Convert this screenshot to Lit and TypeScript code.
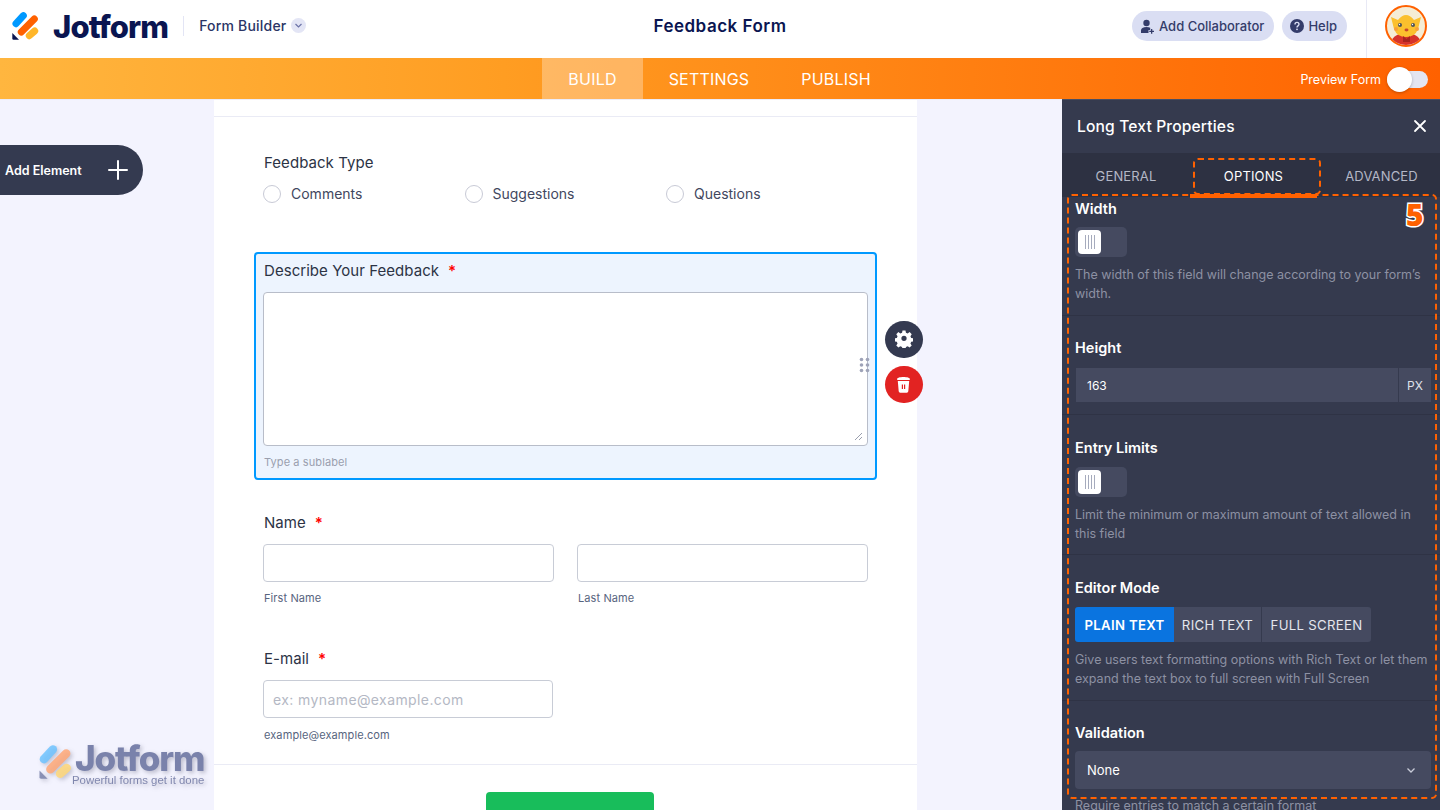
import { LitElement, css, html, svg } from "lit";
import { customElement } from "lit/decorators.js";

const logoMark = (dark: string, blue: string, orange: string, yellow: string) => svg`
  <path d="M0.300 21 L7 27.700 L1.500 27.700 Q0.300 27.700 0.300 26.500 Z" fill=${dark}/>
  <g fill="none" stroke-width="7" stroke-linecap="round">
    <path d="M4 11.700L11.300 3.700" stroke=${blue}/>
    <path d="M9.300 20L22.300 7" stroke=${orange}/>
    <path d="M17.300 23.700L22.700 19" stroke=${yellow}/>
  </g>
`;

@customElement("app-root")
export class AppRoot extends LitElement {
  static styles = css`
    :host {
      display: block;
      width: 1440px;
      height: 810px;
      overflow: hidden;
      position: relative;
      font-family: Inter, "Liberation Sans", sans-serif;
      background: #f3f3fe;
      color: #2c3345;
    }

    /* top bar */
    .topbar {
      height: 58px;
      background: #fff;
      display: flex;
      align-items: center;
    }
    .brand {
      display: flex;
      align-items: center;
      width: 320px;
      height: 52px;
      margin-bottom: 6px;
      padding-left: 12px;
      box-sizing: border-box;
    }
    .wordmark {
      margin-left: 14px;
      font-size: 31px;
      font-weight: 800;
      letter-spacing: -0.900px;
      color: #0a1551;
      line-height: 1;
    }
    .brand-sep {
      width: 1px;
      height: 20px;
      background: #e3e5f5;
      margin: 0 15px;
    }
    .product {
      font-size: 14px;
      color: #2b3566;
      font-weight: 500;
      letter-spacing: 0.2px;
      margin-bottom: 2px;
    }
    .caret {
      width: 15px;
      height: 15px;
      margin: 0 0 1px 5px;
      border-radius: 50%;
      background: #e3e5f5;
      display: flex;
      align-items: center;
      justify-content: center;
    }
    .title {
      flex: 1;
      margin-bottom: 6px;
      text-align: center;
      font-size: 17px;
      font-weight: 600;
      letter-spacing: 0.5px;
      color: #0a1551;
    }
    .actions {
      width: 320px;
      height: 58px;
      display: flex;
      align-items: center;
      box-sizing: border-box;
      padding-left: 12px;
    }
    .pill {
      height: 30px;
      margin-bottom: 6px;
      border-radius: 15px;
      background: #dadef3;
      color: #343c6a;
      font-size: 13px;
      font-weight: 500;
      display: flex;
      align-items: center;
      gap: 4px;
      padding: 0 10px 0 8px;
      box-sizing: border-box;
      margin-right: 8px;
    }
    .user {
      margin-left: auto;
      width: 74px;
      height: 58px;
      border-left: 1px solid #e8e9f5;
      box-sizing: border-box;
      display: flex;
      align-items: center;
      justify-content: center;
      padding: 0 0 6px 5px;
    }

    /* orange nav */
    .nav {
      height: 42px;
      box-sizing: border-box;
      background: linear-gradient(90deg, #ffb63f 0%, #ff9d22 35%, #ff6100 100%);
      border-bottom: 1px solid #000;
      border-image: linear-gradient(90deg, #ececf8 1062px, #4a4e62 1062px) 1;
      background-clip: padding-box;
      display: flex;
      justify-content: center;
      position: relative;
      padding-right: 2px;
    }
    .nav-item {
      height: 41px;
      display: flex;
      align-items: center;
      justify-content: center;
      color: #fff;
      font-size: 16px;
      letter-spacing: 0.2px;
      text-indent: 1px;
      box-sizing: border-box;
    }
    .nav-item.active {
      background: rgba(255, 255, 255, 0.3);
    }
    .preview {
      position: absolute;
      right: 12px;
      top: 0;
      height: 41px;
      padding-top: 1px;
      box-sizing: border-box;
      display: flex;
      align-items: center;
      gap: 6px;
      color: #fff;
      font-size: 12.5px;
    }
    .preview-track {
      width: 41px;
      height: 17px;
      border-radius: 9px;
      background: #e3e5f0;
      position: relative;
    }
    .preview-knob {
      position: absolute;
      left: 0;
      top: -4px;
      width: 25px;
      height: 25px;
      border-radius: 50%;
      background: #fff;
      box-shadow: 0 1px 3px rgba(0, 0, 0, 0.25);
    }

    /* main area */
    .main {
      height: 710px;
      display: flex;
    }
    .canvas {
      width: 1062px;
      position: relative;
      overflow: hidden;
    }
    .card {
      width: 703px;
      margin-left: 214px;
      height: 100%;
      background: #fff;
      box-sizing: border-box;
      position: relative;
    }
    .card-top {
      height: 17px;
      border-bottom: 1px solid #eaebf5;
      box-sizing: border-box;
    }
    .fields {
      padding: 0 40px;
    }
    .field-label {
      font-size: 15px;
      line-height: 20px;
      letter-spacing: 0.05px;
      color: #2c3345;
      font-weight: 400;
      margin-left: 10px;
    }
    .req {
      color: #f00;
      margin-left: 9px;
      font-weight: 600;
    }
    .type {
      padding-top: 36px;
    }
    .radios {
      display: grid;
      grid-template-columns: 201.5px 201.5px 1fr;
      margin-top: 11px;
      padding-left: 9px;
    }
    .radio {
      display: flex;
      align-items: center;
      gap: 10px;
      font-size: 14px;
      line-height: 20px;
      color: #42475e;
    }
    .dot {
      width: 18px;
      height: 18px;
      border: 1px solid #c8cad6;
      border-radius: 50%;
      box-sizing: border-box;
      background: #fff;
      flex: none;
    }
    .selected {
      margin-top: 48px;
      height: 228px;
      border: 2px solid #0099ff;
      border-radius: 4px;
      background: #edf4fe;
      box-sizing: border-box;
      padding: 7px 7px 0 7px;
      position: relative;
    }
    .selected .field-label {
      margin-left: 1px;
    }
    .textarea {
      margin-top: 11px;
      height: 154px;
      background: #fff;
      border: 1px solid #b8bdc9;
      border-radius: 4px;
      box-sizing: border-box;
      position: relative;
    }
    .resize {
      position: absolute;
      right: 4px;
      bottom: 4px;
    }
    .grip {
      position: absolute;
      right: -3px;
      top: 64px;
    }
    .sub {
      font-size: 11px;
      line-height: 14px;
      letter-spacing: 0.1px;
      color: #57647e;
    }
    .selected .sub {
      color: #9a9fae;
      margin: 9px 0 0 1px;
    }
    .name {
      margin-top: 33px;
    }
    .input {
      height: 38px;
      background: #fff;
      border: 1px solid #c8ccd6;
      border-radius: 4px;
      box-sizing: border-box;
      display: flex;
      align-items: center;
      padding-left: 9px;
      font-size: 14px;
      letter-spacing: 0.4px;
      color: #b4b8c4;
    }
    .name-row {
      display: grid;
      grid-template-columns: 291px 291px;
      column-gap: 23px;
      margin: 11px 0 0 9px;
    }
    .name-row .sub {
      margin: 9px 0 0 1px;
    }
    .email {
      margin-top: 44px;
    }
    .email-box {
      width: 290px;
      margin: 11px 0 0 9px;
    }
    .email-box .sub {
      margin: 10px 0 0 1px;
    }
    .submit-line {
      height: 28px;
      margin-top: 22px;
      border-top: 1px solid #eaebf5;
      box-sizing: border-box;
    }
    .submit {
      width: 168px;
      height: 50px;
      margin-left: 272px;
      background: #18bd5b;
      border-radius: 4px;
      color: #fff;
      font-size: 16px;
      font-weight: 600;
      display: flex;
      align-items: center;
      justify-content: center;
    }

    .add {
      position: absolute;
      left: 0;
      top: 45px;
      width: 143px;
      height: 50px;
      background: #343a50;
      color: #fff;
      border-radius: 0 25px 25px 0;
      display: flex;
      align-items: center;
      justify-content: space-between;
      box-sizing: border-box;
      padding: 0 15px 0 5px;
      font-size: 12.5px;
      font-weight: 600;
    }
    .round {
      position: absolute;
      left: 885px;
      width: 37.500px;
      height: 37.500px;
      border-radius: 50%;
      display: flex;
      align-items: center;
      justify-content: center;
    }
    .gear {
      top: 220.500px;
      background: #343a50;
    }
    .trash {
      top: 265.500px;
      background: #e22322;
    }

    .mark {
      position: absolute;
      left: 38px;
      top: 643px;
      width: 170px;
      height: 46px;
      color: #7a82ab;
      filter: drop-shadow(2px 2px 2px rgba(60, 60, 90, 0.3));
    }
    .mark-word {
      position: absolute;
      left: 37px;
      top: 0;
      font-size: 35px;
      font-weight: 800;
      letter-spacing: -1.100px;
      line-height: 30px;
    }
    .mark-sub {
      position: absolute;
      left: 34px;
      top: 30px;
      white-space: nowrap;
      font-family: "Liberation Sans", sans-serif;
      font-size: 11.400px;
      line-height: 14px;
      color: #8087ae;
    }
    .mark svg {
      position: absolute;
      left: 1px;
      top: 2px;
    }

    /* properties panel */
    .panel {
      width: 378px;
      background: #353a4e;
      color: #fff;
      position: relative;
      overflow: hidden;
    }
    .panel-head {
      height: 53px;
      padding: 0 13px 1px 15px;
      box-sizing: border-box;
      display: flex;
      align-items: center;
      justify-content: space-between;
      font-size: 15.600px;
      font-weight: 500;
      letter-spacing: 0.15px;
    }
    .tabs {
      height: 44px;
      background: #2d3142;
      display: grid;
      grid-template-columns: 128px 127px 1fr;
    }
    .tab {
      display: flex;
      align-items: center;
      justify-content: center;
      padding-top: 1px;
      font-size: 13px;
      letter-spacing: 0.15px;
      color: #b4b8c7;
      box-sizing: border-box;
    }
    .tab:last-child {
      padding-left: 6px;
    }
    .tab.active {
      color: #fff;
      position: relative;
      z-index: 2;
    }
    .tab.active::after {
      content: "";
      position: absolute;
      left: 0;
      right: 0;
      bottom: -1px;
      height: 4px;
      background: #ff6100;
    }
    .section {
      padding: 0 9px 0 13px;
      border-bottom: 1px solid #2f3345;
      box-sizing: border-box;
    }
    .section:last-child {
      border-bottom: 0;
    }
    .prop {
      font-size: 14.500px;
      font-weight: 600;
      line-height: 20px;
    }
    .help {
      font-size: 12.500px;
      line-height: 19px;
      color: #8d91a3;
    }
    .switch {
      width: 52px;
      height: 30px;
      background: #454a60;
      border-radius: 5px;
      position: relative;
    }
    .switch-knob {
      position: absolute;
      left: 3px;
      top: 3px;
      width: 23px;
      height: 24px;
      background: #fff;
      border-radius: 4px;
      display: flex;
      align-items: center;
      justify-content: center;
      gap: 2px;
    }
    .switch-knob i {
      width: 1px;
      height: 14px;
      background: #a6abbd;
    }
    .s-width {
      height: 119px;
      padding-top: 2px;
    }
    .s-width .switch {
      margin-top: 8px;
    }
    .s-width .help {
      margin-top: 8px;
    }
    .s-height {
      height: 99px;
      padding-top: 22px;
    }
    .num {
      margin: 10px 0 0 1px;
      height: 34px;
      background: #454a60;
      display: flex;
      align-items: center;
      justify-content: space-between;
      font-size: 12px;
      padding-left: 11px;
    }
    .num span:last-child {
      width: 33px;
      height: 34px;
      border-left: 1px solid #353a4e;
      box-sizing: border-box;
      display: flex;
      align-items: center;
      justify-content: center;
      color: #dfe1ea;
    }
    .s-entry {
      height: 140px;
      padding-top: 23px;
    }
    .s-entry .switch {
      margin-top: 9px;
    }
    .s-entry .help {
      margin-top: 8px;
    }
    .s-mode {
      height: 146px;
      padding-top: 23px;
    }
    .seg {
      display: inline-flex;
      margin-top: 9px;
      height: 35px;
      border-radius: 3px;
      overflow: hidden;
      vertical-align: top;
    }
    .seg span {
      background: #454a60;
      display: flex;
      align-items: center;
      justify-content: center;
      font-size: 13.200px;
      letter-spacing: 0.3px;
      color: #e4e6ee;
      border-right: 1px solid #353a4e;
      box-sizing: border-box;
    }
    .seg span:last-child {
      border-right: 0;
    }
    .seg span.on {
      background: #0a74e0;
      color: #fff;
      font-weight: 600;
      border-right: 0;
    }
    .s-mode .help {
      margin-top: 8px;
    }
    .s-valid {
      padding-top: 22px;
    }
    .select {
      margin-top: 8px;
      height: 38px;
      background: #454a60;
      border-radius: 4px;
      display: flex;
      align-items: center;
      justify-content: space-between;
      padding: 0 15px 0 12px;
      font-size: 13px;
    }
    .s-valid .help {
      margin-top: 7px;
    }

    .dash-tab {
      position: absolute;
      left: 131px;
      top: 58px;
      width: 127.500px;
      height: 37px;
      box-sizing: border-box;
      border: 2px dashed #ff6100;
      border-radius: 5px;
    }
    .dash-body {
      position: absolute;
      left: 5px;
      top: 93.500px;
      width: 369.500px;
      height: 605px;
      box-sizing: border-box;
      border: 2px dashed #ff6100;
      border-radius: 5px;
    }
    .step {
      position: absolute;
      left: 344px;
      top: 98px;
      font-family: "Open Sans", sans-serif;
      font-size: 30px;
      font-weight: 800;
      line-height: 34px;
      color: #ff6100;
      -webkit-text-stroke: 3px #fff;
      paint-order: stroke fill;
    }
  `;

  private field(label: string) {
    return html`<div class="field-label">${label}<span class="req">*</span></div>`;
  }

  private toggle() {
    return html`<div class="switch">
      <div class="switch-knob"><i></i><i></i><i></i><i></i></div>
    </div>`;
  }

  render() {
    return html`
      <div class="topbar">
        <div class="brand">
          <svg width="27" height="28" viewBox="0 0 27 28">${logoMark("#0a1551", "#0099ff", "#ff6100", "#ffb629")}</svg>
          <span class="wordmark">Jotform</span>
          <span class="brand-sep"></span>
          <span class="product">Form Builder</span>
          <span class="caret">
            <svg width="9" height="9" viewBox="0 0 9 9"><path d="M1.500 3l3 3 3-3" fill="none" stroke="#6c73a8" stroke-width="1.200"/></svg>
          </span>
        </div>
        <div class="title">Feedback Form</div>
        <div class="actions">
          <div class="pill">
            <svg width="15" height="15" viewBox="0 0 15 15" fill="#343c6a">
              <circle cx="6.500" cy="4" r="3.200"/>
              <path d="M1 14v-2.500C1 9.500 3 8 6.500 8c1.500 0 2.800.3 3.700.8V11H8.500v3z"/>
              <path d="M11 10h1.300v1.700H14V13h-1.700v1.700H11V13H9.300v-1.300H11z"/>
            </svg>
            Add Collaborator
          </div>
          <div class="pill">
            <svg width="14" height="14" viewBox="0 0 14 14">
              <circle cx="7" cy="7" r="7" fill="#343c6a"/>
              <path d="M5 5.400C5 4.200 5.900 3.400 7 3.400s2 .8 2 1.900c0 1.600-2 1.500-2 3.100" fill="none" stroke="#dadef3" stroke-width="1.400"/>
              <circle cx="7" cy="10.300" r="0.900" fill="#dadef3"/>
            </svg>
            Help
          </div>
          <div class="user">
            <svg width="42" height="42" viewBox="0 0 42 42">
              <circle cx="21" cy="21" r="20" fill="#f5edd5" stroke="#ff6100" stroke-width="2"/>
              <clipPath id="av"><circle cx="21" cy="21" r="19"/></clipPath>
              <g clip-path="url(#av)">
                <path d="M6 38c1-7 8-10 15-10s14 3 15 10v6H6z" fill="#d6332a"/>
                <path d="M6 12l7 3q8-10 16 0l7-3-3 12q-3 8-12 8T9 24z" fill="#fbc02d"/>
                <circle cx="15" cy="20" r="2" fill="#4f5358"/>
                <circle cx="28" cy="20" r="2" fill="#4f5358"/>
                <circle cx="14.500" cy="19.500" r="0.700" fill="#fff"/>
                <circle cx="27.500" cy="19.500" r="0.700" fill="#fff"/>
                <ellipse cx="21.500" cy="25" rx="2" ry="1.400" fill="#c9482b"/>
                <circle cx="11" cy="24" r="2" fill="#f7a13a"/>
                <circle cx="32" cy="24" r="2" fill="#f7a13a"/>
                <path d="M18 31l3.500 3 3.500-3v6h-7z" fill="#a8241e"/>
              </g>
            </svg>
          </div>
        </div>
      </div>

      <div class="nav">
        <div class="nav-item active" style="width:101px">BUILD</div>
        <div class="nav-item" style="width:132px">SETTINGS</div>
        <div class="nav-item" style="width:122px">PUBLISH</div>
        <div class="preview">
          Preview Form
          <div class="preview-track"><div class="preview-knob"></div></div>
        </div>
      </div>

      <div class="main">
        <div class="canvas">
          <div class="card">
            <div class="card-top"></div>
            <div class="fields">
              <div class="type">
                <div class="field-label">Feedback Type</div>
                <div class="radios">
                  <div class="radio"><span class="dot"></span>Comments</div>
                  <div class="radio"><span class="dot"></span>Suggestions</div>
                  <div class="radio"><span class="dot"></span>Questions</div>
                </div>
              </div>
              <div class="selected">
                ${this.field("Describe Your Feedback")}
                <div class="textarea">
                  <svg class="resize" width="9" height="9" viewBox="0 0 9 9"><path d="M1 8l7-7M5 8l3-3" stroke="#9a9fae" fill="none"/></svg>
                  <svg class="grip" width="11" height="16" viewBox="0 0 11 16" fill="#9ea3b8">
                    <circle cx="2.500" cy="2.500" r="1.800"/><circle cx="8.500" cy="2.500" r="1.800"/>
                    <circle cx="2.500" cy="8" r="1.800"/><circle cx="8.500" cy="8" r="1.800"/>
                    <circle cx="2.500" cy="13.500" r="1.800"/><circle cx="8.500" cy="13.500" r="1.800"/>
                  </svg>
                </div>
                <div class="sub">Type a sublabel</div>
              </div>
              <div class="name">
                ${this.field("Name")}
                <div class="name-row">
                  <div><div class="input"></div><div class="sub">First Name</div></div>
                  <div><div class="input"></div><div class="sub">Last Name</div></div>
                </div>
              </div>
              <div class="email">
                ${this.field("E-mail")}
                <div class="email-box">
                  <div class="input">ex: myname@example.com</div>
                  <div class="sub">example@example.com</div>
                </div>
              </div>
            </div>
            <div class="submit-line"></div>
            <div class="submit">Submit</div>
          </div>

          <div class="add">
            Add Element
            <svg width="20" height="20" viewBox="0 0 20 20"><path d="M10 1v18M1 10h18" stroke="#fff" stroke-width="2" stroke-linecap="round"/></svg>
          </div>
          <div class="round gear">
            <svg width="18" height="18" viewBox="0 0 24 24" fill="#fff">
              <path fill-rule="evenodd" d="M10 1.500h4l.6 3 2.300 1 2.600-1.700 2.800 2.800-1.700 2.600 1 2.300 3 .6v4l-3 .6-1 2.300 1.700 2.600-2.800 2.800-2.600-1.700-2.300 1-.6 3h-4l-.6-3-2.300-1-2.600 1.700-2.800-2.800 1.700-2.600-1-2.300-3-.6v-4l3-.6 1-2.300L1.700 6.600l2.800-2.800 2.600 1.700 2.300-1zM12 8.500a3.500 3.500 0 1 0 0 7 3.500 3.500 0 0 0 0-7z" transform="translate(0 -1)"/>
            </svg>
          </div>
          <div class="round trash">
            <svg width="15" height="17" viewBox="0 0 15 17" fill="#fff">
              <path d="M1 3.200C1 1.800 4 1 7.500 1s6.500.8 6.500 2.200c0 .5-.3.8-.8.8H1.800c-.5 0-.8-.3-.8-.8z"/>
              <path fill-rule="evenodd" d="M1.800 5h11.400l-.9 10.300A1.500 1.500 0 0 1 10.800 16.700H4.200a1.500 1.500 0 0 1-1.500-1.400zM5.800 8.500v4.500h1.200V8.500zM8 8.500v4.500h1.200V8.500z"/>
            </svg>
          </div>
          <div class="mark">
            <svg width="33" height="34" viewBox="0 0 27 28" opacity="0.85">${logoMark("#7a82ab", "#6fc3ff", "#ffa878", "#ffd878")}</svg>
            <span class="mark-word">Jotform</span>
            <span class="mark-sub">Powerful forms get it done</span>
          </div>
        </div>

        <aside class="panel">
          <div class="panel-head">
            Long Text Properties
            <svg width="14" height="14" viewBox="0 0 14 14"><path d="M2 2l10 10M12 2L2 12" stroke="#fff" stroke-width="1.800" stroke-linecap="round"/></svg>
          </div>
          <div class="tabs">
            <div class="tab">GENERAL</div>
            <div class="tab active">OPTIONS</div>
            <div class="tab">ADVANCED</div>
          </div>
          <div class="section s-width">
            <div class="prop">Width</div>
            ${this.toggle()}
            <div class="help">The width of this field will change according to your form’s width.</div>
          </div>
          <div class="section s-height">
            <div class="prop">Height</div>
            <div class="num"><span>163</span><span>PX</span></div>
          </div>
          <div class="section s-entry">
            <div class="prop">Entry Limits</div>
            ${this.toggle()}
            <div class="help">Limit the minimum or maximum amount of text allowed in this field</div>
          </div>
          <div class="section s-mode">
            <div class="prop">Editor Mode</div>
            <div class="seg">
              <span class="on" style="width:99px">PLAIN TEXT</span>
              <span style="width:88px">RICH TEXT</span>
              <span style="width:109px">FULL SCREEN</span>
            </div>
            <div class="help">Give users text formatting options with Rich Text or let them expand the text box to full screen with Full Screen</div>
          </div>
          <div class="section s-valid">
            <div class="prop">Validation</div>
            <div class="select">
              None
              <svg width="10" height="10" viewBox="0 0 10 10"><path d="M1.500 3.500L5 7l3.500-3.500" fill="none" stroke="#c8cbd8" stroke-width="1.300"/></svg>
            </div>
            <div class="help">Require entries to match a certain format</div>
          </div>
          <div class="dash-tab"></div>
          <div class="dash-body"></div>
          <div class="step">5</div>
        </aside>
      </div>
    `;
  }
}
